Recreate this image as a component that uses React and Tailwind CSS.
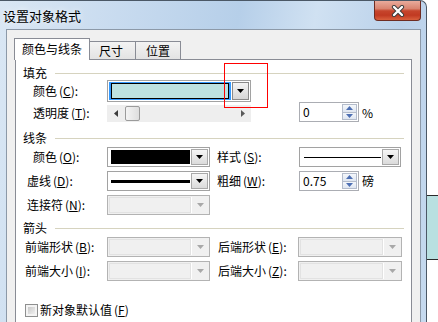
import React from "react";

function Tri({ color = "#000", up = false, w = 7, h = 4 }) {
  return (
    <svg width={w} height={h} viewBox={`0 0 ${w} ${h}`} className="block">
      <path d={up ? `M0 ${h}H${w}L${w / 2} 0z` : `M0 0H${w}L${w / 2} ${h}z`} fill={color} />
    </svg>
  );
}

function Label({ t, k }) {
  return (
    <span className="whitespace-nowrap leading-[14px]">
      {t}
      <span className="ml-[2px]">
        (<span className="underline underline-offset-[1px]">{k}</span>):
      </span>
    </span>
  );
}

function Combo({ w, children }) {
  return (
    <div className={`flex h-full border border-[#a2a2a2] bg-white p-[1px] ${w}`}>
      <div className="flex-1 min-w-0 h-full">{children}</div>
      <div className="w-[17px] h-full border border-[#a9a9a9] bg-[linear-gradient(#f6f6f6,#dbdbdb)] flex items-center justify-center">
        <Tri />
      </div>
    </div>
  );
}

function DisCombo({ w }) {
  return (
    <div className={`flex h-full border border-[#b3b3b3] bg-[#f0f0f0] p-[1px] ${w}`}>
      <div className="flex-1 min-w-0 h-full border border-[#e2e2e2]" />
      <div className="w-[17px] h-full border-l border-white bg-[#f0f0f0] flex items-center justify-center">
        <Tri color="#a8a8a8" />
      </div>
    </div>
  );
}

function Spin({ v }) {
  return (
    <div className="w-[60px] h-[20px] border border-[#abadb3] bg-white flex">
      <div className="flex-1 pl-[3px] flex items-center leading-none">{v}</div>
      <div className="w-[17px] flex flex-col p-[1px]">
        <div className="flex-1 border border-[#b4bccb] bg-[linear-gradient(#f4f7fb,#dfe6f1)] flex items-center justify-center">
          <Tri up color="#4d6fb3" w={7} h={4} />
        </div>
        <div className="flex-1 border border-[#b4bccb] border-t-0 bg-[linear-gradient(#f4f7fb,#dfe6f1)] flex items-center justify-center">
          <Tri color="#4d6fb3" w={7} h={4} />
        </div>
      </div>
    </div>
  );
}

function Header({ t, mt }) {
  return (
    <div className={`h-[14px] flex items-center ${mt}`}>
      <span className="leading-[14px]">{t}</span>
      <div className="ml-[8px] flex-1 h-px bg-[#d6d3bf]" />
    </div>
  );
}

export default function App() {
  return (
    <div className="relative w-[438px] h-[322px] overflow-hidden flex bg-white text-[12px] text-black font-['Noto_Sans_CJK_SC',sans-serif]">
      <div className="w-[427px] h-full shrink-0 flex flex-col border-t border-r border-[#4b5866] rounded-tr-[7px] bg-[linear-gradient(100deg,#dae7f4_0%,#c8dbef_25%,#b6cfe9_50%,#d0e1f2_66%,#bad1ea_84%,#c6daef_100%)]">
        {/* title bar */}
        <div className="h-[28px] shrink-0 flex items-start justify-between">
          <span className="ml-[3px] mt-[6px] text-[13px] leading-[18px] [text-shadow:0_0_6px_rgba(255,255,255,0.95)]">
            设置对象格式
          </span>
          <div className="mr-[5px] w-[47px] h-[20px] rounded-b-[4px] border border-t-0 border-[#6e2c22] bg-[linear-gradient(#e9ab9c_0%,#d98470_40%,#c6452c_52%,#c13a22_75%,#d9603d_100%)] flex items-center justify-center">
            <svg width="14" height="12" viewBox="0 0 14 12">
              <path d="M3 2L11 10M11 2L3 10" stroke="#3a3a3a" strokeWidth="4.2" strokeLinecap="round" />
              <path d="M3 2L11 10M11 2L3 10" stroke="#ffffff" strokeWidth="2.4" strokeLinecap="round" />
            </svg>
          </div>
        </div>
        {/* client */}
        <div className="ml-[6px] mr-[5px] flex-1 min-h-0 overflow-hidden border border-b-0 border-[#8c99a8] bg-[#f0f0f0] flex flex-col px-[8px] pt-[8px]">
          <div className="flex items-end h-[22px] -mb-px relative z-10 shrink-0">
            <div className="-ml-px w-[76px] h-[22px] bg-white border border-b-0 border-[#898c95] flex items-center justify-center pb-[1px] leading-[14px]">
              颜色与线条
            </div>
            <div className="w-[46px] h-[19px] border border-l-0 border-[#898c95] bg-[linear-gradient(#f3f3f3,#e3e3e3)] flex items-center justify-center leading-[14px] pr-[3px]">
              尺寸
            </div>
            <div className="w-[45px] h-[19px] border border-l-0 border-[#898c95] bg-[linear-gradient(#f3f3f3,#e3e3e3)] flex items-center justify-center leading-[14px]">
              位置
            </div>
          </div>
          <div className="h-[300px] shrink-0 border border-[#898c95] bg-white px-[7px] flex flex-col">
            <Header t="填充" mt="mt-[6px]" />
            {/* fill color */}
            <div className="flex h-[22px]">
              <div className="w-[84px] pl-[10px] flex items-center">
                <Label t="颜色" k="C" />
              </div>
              <div className="w-[144px] h-full border border-[#a2a2a2] bg-white p-[1px] flex">
                <div className="flex-1 h-full bg-[#3399ff] px-[2px] py-[1px]">
                  <div className="w-full h-full border border-black bg-[#bce1e1]" />
                </div>
                <div className="ml-[1px] w-[17px] h-full border border-[#8a8a8a] bg-[linear-gradient(#f4f4f4,#d6d6d6)] flex items-center justify-center">
                  <Tri />
                </div>
              </div>
            </div>
            {/* transparency */}
            <div className="flex h-[20px] items-start">
              <div className="w-[84px] pl-[10px] pt-[4px] flex items-center">
                <Label t="透明度" k="T" />
              </div>
              <div className="mt-[3px] w-[144px] h-[17px] bg-[#eeeeee] flex items-center">
                <div className="w-[17px] h-full flex items-center justify-center">
                  <svg width="4" height="7" viewBox="0 0 4 7" className="block">
                    <path d="M4 0V7L0 3.5z" fill="#3c3c3c" />
                  </svg>
                </div>
                <div className="ml-[1px] w-[15px] h-[15px] border border-[#9b9b9b] rounded-[2px] bg-[linear-gradient(90deg,#f4f4f4,#dedede)]" />
                <div className="flex-1" />
                <div className="w-[17px] h-full flex items-center justify-center">
                  <svg width="4" height="7" viewBox="0 0 4 7" className="block">
                    <path d="M0 0V7L4 3.5z" fill="#5a5a5a" />
                  </svg>
                </div>
              </div>
              <div className="ml-[48px]">
                <Spin v="0" />
              </div>
              <span className="ml-[3px] mt-[4px] leading-[14px]">%</span>
            </div>

            <Header t="线条" mt="mt-[9px]" />
            <div className="flex h-[20px] mt-[2px]">
              <div className="w-[84px] pl-[10px] flex items-center">
                <Label t="颜色" k="O" />
              </div>
              <Combo w="w-[103px]">
                <div className="w-full h-full py-[1px] pl-[2px] pr-[1px]">
                  <div className="w-full h-full bg-black" />
                </div>
              </Combo>
              <div className="ml-[7px] w-[82px] flex items-center">
                <Label t="样式" k="S" />
              </div>
              <Combo w="w-[102px]">
                <div className="w-full h-full flex items-center pl-[3px] pr-[1px]">
                  <div className="w-full h-px bg-black" />
                </div>
              </Combo>
            </div>
            <div className="flex h-[20px] mt-[4px]">
              <div className="w-[84px] pl-[4px] flex items-center">
                <Label t="虚线" k="D" />
              </div>
              <Combo w="w-[103px]">
                <div className="w-full h-full flex items-center pl-[2px] pr-[1px]">
                  <div className="w-full h-[3px] bg-black" />
                </div>
              </Combo>
              <div className="ml-[7px] w-[82px] flex items-center">
                <Label t="粗细" k="W" />
              </div>
              <Spin v="0.75" />
              <span className="ml-[3px] self-center leading-[14px]">磅</span>
            </div>
            <div className="flex h-[20px] mt-[4px]">
              <div className="w-[84px] pl-[4px] flex items-center">
                <Label t="连接符" k="N" />
              </div>
              <DisCombo w="w-[103px]" />
            </div>

            <Header t="箭头" mt="mt-[6px]" />
            <div className="flex h-[20px] mt-[2px]">
              <div className="w-[84px] pl-[2px] flex items-center">
                <Label t="前端形状" k="B" />
              </div>
              <DisCombo w="w-[103px]" />
              <div className="ml-[8px] w-[80px] flex items-center">
                <Label t="后端形状" k="E" />
              </div>
              <DisCombo w="w-[104px]" />
            </div>
            <div className="flex h-[20px] mt-[4px]">
              <div className="w-[84px] pl-[2px] flex items-center">
                <Label t="前端大小" k="I" />
              </div>
              <DisCombo w="w-[103px]" />
              <div className="ml-[8px] w-[80px] flex items-center">
                <Label t="后端大小" k="Z" />
              </div>
              <DisCombo w="w-[104px]" />
            </div>

            <div className="mt-[22px] h-[14px] flex items-center pl-[2px]">
              <div className="w-[13px] h-[13px] border border-[#8e8f8f] bg-[#f4f4f4] p-[2px]">
                <div className="w-full h-full bg-[linear-gradient(135deg,#c9c9c9,#f0f0f0)]" />
              </div>
              <span className="ml-[2px] leading-[14px] whitespace-nowrap">
                新对象默认值
                <span className="ml-[2px]">
                  (<span className="underline underline-offset-[1px]">F</span>)
                </span>
              </span>
            </div>
          </div>
        </div>
      </div>
      <div className="flex-1 flex flex-col">
        <div className="h-[195px] shrink-0" />
        <div className="h-[65px] shrink-0 border-y border-[#2a2a2a] bg-[#b9e0e1]" />
      </div>
      <div className="absolute left-[224px] top-[63px] w-[44px] h-[45px] border border-[#ff0000]" />
    </div>
  );
}
